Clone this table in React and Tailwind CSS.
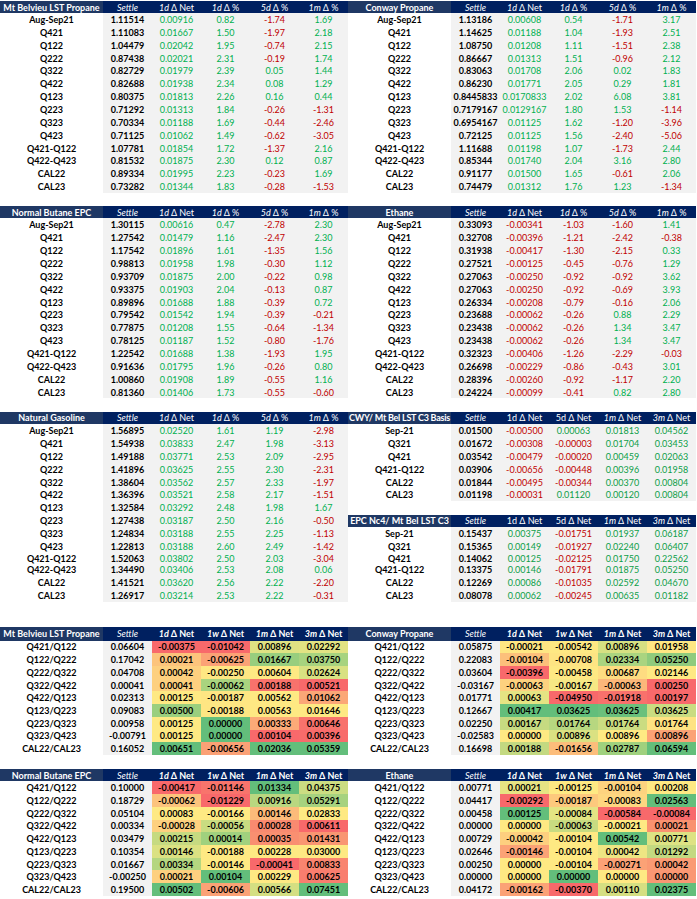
import React from 'react';

const GREEN = 'text-[#00b050]';
const GREEN2 = 'text-[#0c9e48]';

const HTOP = [
  { n: <i>Settle</i> },
  { n: <><i>1d</i>&nbsp;Δ Net</> },
  { n: <><i>1d</i>&nbsp;Δ %</> },
  { n: <><i>5d</i>&nbsp;Δ %</> },
  { n: <><i>1m</i>&nbsp;Δ %</> },
];

const HBASIS = [
  { n: <i>Settle</i> },
  { n: <>1d&nbsp;Δ Net</> },
  { n: <>5d&nbsp;Δ Net</> },
  { n: <><i>1m</i>&nbsp;Δ Net</> },
  { n: <><i>3m</i>&nbsp;Δ Net</> },
];

const HHEAT = [
  { n: <i className="font-normal">Settle</i> },
  { n: <><i>1d</i>&nbsp;Δ Net</> },
  { n: <><i>1w</i>&nbsp;Δ Net</> },
  { n: <><i>1m</i>&nbsp;Δ Net</> },
  { n: <><i>3m</i>&nbsp;Δ Net</> },
];

const mtbel = [
  ['Aug-Sep21', '1.11514', '0.00916', '0.82', '-1.74', '1.69'],
  ['Q421', '1.11083', '0.01667', '1.50', '-1.97', '2.18'],
  ['Q122', '1.04479', '0.02042', '1.95', '-0.74', '2.15'],
  ['Q222', '0.87438', '0.02021', '2.31', '-0.19', '1.74'],
  ['Q322', '0.82729', '0.01979', '2.39', '0.05', '1.44'],
  ['Q422', '0.82688', '0.01938', '2.34', '0.08', '1.29'],
  ['Q123', '0.80375', '0.01813', '2.26', '0.16', '0.44'],
  ['Q223', '0.71292', '0.01313', '1.84', '-0.26', '-1.31'],
  ['Q323', '0.70334', '0.01188', '1.69', '-0.44', '-2.46'],
  ['Q423', '0.71125', '0.01062', '1.49', '-0.62', '-3.05'],
  ['Q421-Q122', '1.07781', '0.01854', '1.72', '-1.37', '2.16'],
  ['Q422-Q423', '0.81532', '0.01875', '2.30', '0.12', '0.87'],
  ['CAL22', '0.89334', '0.01995', '2.23', '-0.23', '1.69'],
  ['CAL23', '0.73282', '0.01344', '1.83', '-0.28', '-1.53'],
];

const conway = [
  ['Aug-Sep21', '1.13186', '0.00608', '0.54', '-1.71', '3.17'],
  ['Q421', '1.14625', '0.01188', '1.04', '-1.93', '2.51'],
  ['Q122', '1.08750', '0.01208', '1.11', '-1.51', '2.38'],
  ['Q222', '0.86667', '0.01313', '1.51', '-0.96', '2.12'],
  ['Q322', '0.83063', '0.01708', '2.06', '0.02', '1.83'],
  ['Q422', '0.86230', '0.01771', '2.05', '0.29', '1.81'],
  ['Q123', '0.8445833', '0.0170833', '2.02', '6.08', '3.81'],
  ['Q223', '0.7179167', '0.0129167', '1.80', '1.53', '-1.14'],
  ['Q323', '0.6954167', '0.01125', '1.62', '-1.20', '-3.96'],
  ['Q423', '0.72125', '0.01125', '1.56', '-2.40', '-5.06'],
  ['Q421-Q122', '1.11688', '0.01198', '1.07', '-1.73', '2.44'],
  ['Q422-Q423', '0.85344', '0.01740', '2.04', '3.16', '2.80'],
  ['CAL22', '0.91177', '0.01500', '1.65', '-0.61', '2.06'],
  ['CAL23', '0.74479', '0.01312', '1.76', '1.23', '-1.34'],
];

const butane = [
  ['Aug-Sep21', '1.30115', '0.00616', '0.47', '-2.78', '2.30'],
  ['Q421', '1.27542', '0.01479', '1.16', '-2.47', '2.30'],
  ['Q122', '1.17542', '0.01896', '1.61', '-1.35', '1.56'],
  ['Q222', '0.98813', '0.01958', '1.98', '-0.30', '1.12'],
  ['Q322', '0.93709', '0.01875', '2.00', '-0.22', '0.98'],
  ['Q422', '0.93375', '0.01903', '2.04', '-0.13', '0.87'],
  ['Q123', '0.89896', '0.01688', '1.88', '-0.39', '0.72'],
  ['Q223', '0.79542', '0.01542', '1.94', '-0.39', '-0.21'],
  ['Q323', '0.77875', '0.01208', '1.55', '-0.64', '-1.34'],
  ['Q423', '0.78125', '0.01187', '1.52', '-0.80', '-1.76'],
  ['Q421-Q122', '1.22542', '0.01688', '1.38', '-1.93', '1.95'],
  ['Q422-Q423', '0.91636', '0.01795', '1.96', '-0.26', '0.80'],
  ['CAL22', '1.00860', '0.01908', '1.89', '-0.55', '1.16'],
  ['CAL23', '0.81360', '0.01406', '1.73', '-0.55', '-0.60'],
];

const ethane = [
  ['Aug-Sep21', '0.33093', '-0.00341', '-1.03', '-1.60', '1.41'],
  ['Q421', '0.32708', '-0.00396', '-1.21', '-2.42', '-0.38'],
  ['Q122', '0.31938', '-0.00417', '-1.30', '-2.15', '0.33'],
  ['Q222', '0.27521', '-0.00125', '-0.45', '-0.76', '1.29'],
  ['Q322', '0.27063', '-0.00250', '-0.92', '-0.92', '3.62'],
  ['Q422', '0.27063', '-0.00250', '-0.92', '-0.69', '3.93'],
  ['Q123', '0.26334', '-0.00208', '-0.79', '-0.16', '2.06'],
  ['Q223', '0.23688', '-0.00062', '-0.26', '0.88', '2.29'],
  ['Q323', '0.23438', '-0.00062', '-0.26', '1.34', '3.47'],
  ['Q423', '0.23438', '-0.00062', '-0.26', '1.34', '3.47'],
  ['Q421-Q122', '0.32323', '-0.00406', '-1.26', '-2.29', '-0.03'],
  ['Q422-Q423', '0.26698', '-0.00229', '-0.86', '-0.43', '3.01'],
  ['CAL22', '0.28396', '-0.00260', '-0.92', '-1.17', '2.20'],
  ['CAL23', '0.24224', '-0.00099', '-0.41', '0.82', '2.80'],
];

const natgas = [
  ['Aug-Sep21', '1.56895', '0.02520', '1.61', '1.19', '-2.98'],
  ['Q421', '1.54938', '0.03833', '2.47', '1.98', '-3.13'],
  ['Q122', '1.49188', '0.03771', '2.53', '2.09', '-2.95'],
  ['Q222', '1.41896', '0.03625', '2.55', '2.30', '-2.31'],
  ['Q322', '1.38604', '0.03562', '2.57', '2.33', '-1.97'],
  ['Q422', '1.36396', '0.03521', '2.58', '2.17', '-1.51'],
  ['Q123', '1.32584', '0.03292', '2.48', '1.98', '1.67'],
  ['Q223', '1.27438', '0.03187', '2.50', '2.16', '-0.50'],
  ['Q323', '1.24834', '0.03188', '2.55', '2.25', '-1.13'],
  ['Q423', '1.22813', '0.03188', '2.60', '2.49', '-1.42'],
  ['Q421-Q122', '1.52063', '0.03802', '2.50', '2.03', '-3.04'],
  ['Q422-Q423', '1.34490', '0.03406', '2.53', '2.08', '0.06'],
  ['CAL22', '1.41521', '0.03620', '2.56', '2.22', '-2.20'],
  ['CAL23', '1.26917', '0.03214', '2.53', '2.22', '-0.31'],
];

const cwy = [
  ['Sep-21', '0.01500', '-0.00500', '0.00063', '0.01813', '0.04562'],
  ['Q321', '0.01672', '-0.00308', '-0.00003', '0.01704', '0.03453'],
  ['Q421', '0.03542', '-0.00479', '-0.00020', '0.00459', '0.02063'],
  ['Q421-Q122', '0.03906', '-0.00656', '-0.00448', '0.00396', '0.01958'],
  ['CAL22', '0.01844', '-0.00495', '-0.00344', '0.00370', '0.00804'],
  ['CAL23', '0.01198', '-0.00031', '0.01120', '0.00120', '0.00804'],
];

const epc = [
  ['Sep-21', '0.15437', '0.00375', '-0.01751', '0.01937', '0.06187'],
  ['Q321', '0.15365', '0.00149', '-0.01927', '0.02240', '0.06407'],
  ['Q421', '0.14062', '0.00125', '-0.02125', '0.01750', '0.22562'],
  ['Q421-Q122', '0.13375', '0.00146', '-0.01791', '0.01875', '0.05250'],
  ['CAL22', '0.12269', '0.00086', '-0.01035', '0.02592', '0.04670'],
  ['CAL23', '0.08078', '0.00062', '-0.00245', '0.00635', '0.01182'],
];

const heat1 = [
  ['Q421/Q122', '0.06604', ['-0.00375', 'bg-[#f8696b]'], ['-0.01042', 'bg-[#f8696b]'], ['0.00896', 'bg-[#dfe283]'], ['0.02292', 'bg-[#e2e383]']],
  ['Q122/Q222', '0.17042', ['0.00021', 'bg-[#fcc47c]'], ['-0.00625', 'bg-[#fba276]'], ['0.01667', 'bg-[#98ce7e]'], ['0.03750', 'bg-[#a7d37f]']],
  ['Q222/Q322', '0.04708', ['0.00042', 'bg-[#fdd07f]'], ['-0.00250', 'bg-[#fee783]'], ['0.00604', 'bg-[#fee983]'], ['0.02624', 'bg-[#d9e182]']],
  ['Q322/Q422', '0.00041', ['0.00041', 'bg-[#fdd07f]'], ['-0.00062', 'bg-[#a9d47f]'], ['0.00188', 'bg-[#f8726c]'], ['0.00521', 'bg-[#f8696b]']],
  ['Q422/Q123', '0.02313', ['0.00125', 'bg-[#fee983]'], ['-0.00187', 'bg-[#fee683]'], ['0.00562', 'bg-[#fee983]'], ['0.01062', 'bg-[#fba777]']],
  ['Q123/Q223', '0.09083', ['0.00500', 'bg-[#9acf7e]'], ['-0.00188', 'bg-[#fee683]'], ['0.00563', 'bg-[#fee983]'], ['0.01646', 'bg-[#fee983]']],
  ['Q223/Q323', '0.00958', ['0.00125', 'bg-[#fee983]'], ['0.00000', 'bg-[#63be7b]'], ['0.00333', 'bg-[#fcaa78]'], ['0.00646', 'bg-[#f8736c]']],
  ['Q323/Q423', '-0.00791', ['0.00125', 'bg-[#fee983]'], ['0.00000', 'bg-[#63be7b]'], ['0.00104', 'bg-[#f8696b]'], ['0.00396', 'bg-[#f86b6b]']],
  ['CAL22/CAL23', '0.16052', ['0.00651', 'bg-[#63be7b]'], ['-0.00656', 'bg-[#fba176]'], ['0.02036', 'bg-[#63be7b]'], ['0.05359', 'bg-[#63be7b]']],
];

const heat2 = [
  ['Q421/Q122', '0.05875', ['-0.00021', 'bg-[#fee683]'], ['-0.00542', 'bg-[#fee883]'], ['0.00896', 'bg-[#d6e082]'], ['0.01958', 'bg-[#fee783]']],
  ['Q122/Q222', '0.22083', ['-0.00104', 'bg-[#fcc07b]'], ['-0.00708', 'bg-[#fee483]'], ['0.02334', 'bg-[#aad480]'], ['0.05250', 'bg-[#8fcb7d]']],
  ['Q222/Q322', '0.03604', ['-0.00396', 'bg-[#f8696b]'], ['-0.00458', 'bg-[#fee883]'], ['0.00687', 'bg-[#fedc81]'], ['0.02146', 'bg-[#fee983]']],
  ['Q322/Q422', '-0.03167', ['-0.00063', 'bg-[#fdd17f]'], ['-0.00167', 'bg-[#f6e884]'], ['-0.00063', 'bg-[#fcb77a]'], ['0.00250', 'bg-[#f8696b]']],
  ['Q422/Q123', '0.01771', ['0.00063', 'bg-[#e5e483]'], ['-0.04950', 'bg-[#f8696b]'], ['-0.01918', 'bg-[#f8716c]'], ['0.00197', 'bg-[#f8696b]']],
  ['Q123/Q223', '0.12667', ['0.00417', 'bg-[#63be7b]'], ['0.03625', 'bg-[#63be7b]'], ['0.03625', 'bg-[#6ac07c]'], ['0.03625', 'bg-[#c9dc81]']],
  ['Q223/Q323', '0.02250', ['0.00167', 'bg-[#c6da81]'], ['0.01764', 'bg-[#b7d780]'], ['0.01764', 'bg-[#cbdc81]'], ['0.01764', 'bg-[#fee382]']],
  ['Q323/Q423', '-0.02583', ['0.00000', 'bg-[#fee983]'], ['0.00896', 'bg-[#dae182]'], ['0.00896', 'bg-[#feea83]'], ['0.00896', 'bg-[#fba276]']],
  ['CAL22/CAL23', '0.16698', ['0.00188', 'bg-[#c3d981]'], ['-0.01656', 'bg-[#fcbd7b]'], ['0.02787', 'bg-[#9fd17e]'], ['0.06594', 'bg-[#63be7b]']],
];

const heat3 = [
  ['Q421/Q122', '0.10000', ['-0.00417', 'bg-[#f8696b]'], ['-0.01146', 'bg-[#f8746c]'], ['0.01334', 'bg-[#63be7b]'], ['0.04375', 'bg-[#cbdd82]']],
  ['Q122/Q222', '0.18729', ['-0.00062', 'bg-[#fcc37c]'], ['-0.01229', 'bg-[#f8696b]'], ['0.00916', 'bg-[#b9d780]'], ['0.05291', 'bg-[#a6d27f]']],
  ['Q222/Q322', '0.05104', ['0.00083', 'bg-[#fee983]'], ['-0.00166', 'bg-[#fee983]'], ['0.00146', 'bg-[#fcbb7a]'], ['0.02833', 'bg-[#fee983]']],
  ['Q322/Q422', '0.00334', ['-0.00028', 'bg-[#fdd07f]'], ['-0.00056', 'bg-[#c9dc81]'], ['0.00028', 'bg-[#f98a70]'], ['0.00611', 'bg-[#f8696b]']],
  ['Q422/Q123', '0.03479', ['0.00215', 'bg-[#c6da81]'], ['0.00014', 'bg-[#a0d17e]'], ['0.00035', 'bg-[#f98f71]'], ['0.01431', 'bg-[#f99672]']],
  ['Q123/Q223', '0.10354', ['0.00146', 'bg-[#dbe182]'], ['-0.00188', 'bg-[#fee983]'], ['0.00228', 'bg-[#fee983]'], ['0.03000', 'bg-[#fee983]']],
  ['Q223/Q323', '0.01667', ['0.00334', 'bg-[#b4d680]'], ['-0.00146', 'bg-[#fee983]'], ['-0.00041', 'bg-[#f8696b]'], ['0.00833', 'bg-[#f9856f]']],
  ['Q323/Q423', '-0.00250', ['0.00021', 'bg-[#fdd07f]'], ['0.00104', 'bg-[#63be7b]'], ['0.00229', 'bg-[#fee983]'], ['0.00625', 'bg-[#f97d6e]']],
  ['CAL22/CAL23', '0.19500', ['0.00502', 'bg-[#63be7b]'], ['-0.00606', 'bg-[#fba276]'], ['0.00566', 'bg-[#d4df82]'], ['0.07451', 'bg-[#63be7b]']],
];

const heat4 = [
  ['Q421/Q122', '0.00771', ['0.00021', 'bg-[#e6e483]'], ['-0.00125', 'bg-[#fee983]'], ['-0.00104', 'bg-[#fdd37f]'], ['0.00208', 'bg-[#fee983]']],
  ['Q122/Q222', '0.04417', ['-0.00292', 'bg-[#f8696b]'], ['-0.00187', 'bg-[#fdc97d]'], ['-0.00083', 'bg-[#fed780]'], ['0.02563', 'bg-[#63be7b]']],
  ['Q222/Q322', '0.00458', ['0.00125', 'bg-[#63be7b]'], ['-0.00084', 'bg-[#e4e483]'], ['-0.00584', 'bg-[#f8696b]'], ['-0.00084', 'bg-[#f8696b]']],
  ['Q322/Q422', '0.00000', ['0.00000', 'bg-[#fee983]'], ['-0.00063', 'bg-[#c8db81]'], ['-0.00021', 'bg-[#fee983]'], ['0.00021', 'bg-[#f99270]']],
  ['Q422/Q123', '0.00729', ['-0.00042', 'bg-[#fdcf7f]'], ['-0.00104', 'bg-[#fee983]'], ['0.00542', 'bg-[#63be7b]'], ['0.00771', 'bg-[#dde283]']],
  ['Q123/Q223', '0.02646', ['-0.00146', 'bg-[#fba276]'], ['-0.00104', 'bg-[#fee983]'], ['0.00042', 'bg-[#eee683]'], ['0.01292', 'bg-[#c3d981]']],
  ['Q223/Q323', '0.00250', ['0.00000', 'bg-[#fee983]'], ['-0.00104', 'bg-[#fee983]'], ['-0.00271', 'bg-[#fba276]'], ['0.00042', 'bg-[#fa9a73]']],
  ['Q323/Q423', '0.00000', ['0.00000', 'bg-[#fee983]'], ['0.00000', 'bg-[#63be7b]'], ['0.00000', 'bg-[#fee983]'], ['0.00000', 'bg-[#fa9773]']],
  ['CAL22/CAL23', '0.04172', ['-0.00162', 'bg-[#fba276]'], ['-0.00370', 'bg-[#f8696b]'], ['0.00110', 'bg-[#d5df82]'], ['0.02375', 'bg-[#63be7b]']],
];

function HeaderRow({ title, cols, h, bold, tight }) {
  return (
    <div className={`flex w-[348px] shrink-0 text-white ${h}`}>
      <div
        className={`w-[103px] shrink-0 bg-[#1f3864] flex items-center justify-center font-bold overflow-hidden whitespace-nowrap ${tight ? 'tracking-[-0.25px]' : ''}`}
      >
        {title}
      </div>
      {cols.map((c, i) => (
        <div
          key={i}
          className={`w-[49px] shrink-0 ${c.bg || 'bg-[#002060]'} flex items-center justify-center whitespace-nowrap ${bold ? 'font-bold' : ''}`}
        >
          {c.n}
        </div>
      ))}
    </div>
  );
}

function DataRow({ r, h, green }) {
  const [label, settle, ...vals] = r;
  return (
    <div className={`flex w-[348px] shrink-0 ${h}`}>
      <div className="w-[103px] shrink-0 flex items-center justify-center font-bold text-black whitespace-nowrap">{label}</div>
      <div className="w-[49px] shrink-0 bg-[#f2f2f2] flex items-center justify-center font-bold text-black">{settle}</div>
      {vals.map((v, i) => (
        <div
          key={i}
          className={`w-[49px] shrink-0 bg-[#f2f2f2] flex items-center justify-center ${v.startsWith('-') ? 'text-[#c00000]' : green}`}
        >
          {v}
        </div>
      ))}
    </div>
  );
}

function HeatRow({ r }) {
  const [label, settle, ...vals] = r;
  return (
    <div className="flex w-[348px] shrink-0 h-[12.73px] font-bold text-black">
      <div className="w-[103px] shrink-0 flex items-center justify-center whitespace-nowrap">{label}</div>
      <div className="w-[49px] shrink-0 bg-[#f2f2f2] flex items-center justify-center">{settle}</div>
      {vals.map(([v, bg], i) => (
        <div key={i} className={`w-[49px] shrink-0 ${bg} flex items-center justify-center`}>
          {v}
        </div>
      ))}
    </div>
  );
}

function TopTable({ title, rows, hh }) {
  return (
    <div className="flex flex-col w-[348px]">
      <HeaderRow title={title} cols={HTOP} h={hh} />
      {rows.map((r, i) => (
        <DataRow key={i} r={r} h="h-[12.86px]" green={GREEN} />
      ))}
    </div>
  );
}

function HeatTable({ title, rows, hh }) {
  return (
    <div className="flex flex-col w-[348px]">
      <HeaderRow title={title} cols={HHEAT} h={hh} bold />
      {rows.map((r, i) => (
        <HeatRow key={i} r={r} />
      ))}
    </div>
  );
}

const s3h = (i) => (i === 10 ? 'h-[10.4px]' : 'h-[12.9px]');

export default function App() {
  return (
    <div className="w-[697px] h-[899px] overflow-hidden bg-white pt-[1px] font-['Lato','Noto_Sans',sans-serif] text-[9px] leading-none">
      {/* Section 1 */}
      <div className="flex">
        <TopTable title="Mt Belvieu LST Propane" rows={mtbel} hh="h-[12px]" />
        <TopTable title="Conway Propane" rows={conway} hh="h-[12px]" />
      </div>
      <div className="h-[13px]" />
      {/* Section 2 */}
      <div className="flex">
        <TopTable title="Normal Butane EPC" rows={butane} hh="h-[12.4px]" />
        <TopTable title="Ethane" rows={ethane} hh="h-[12.4px]" />
      </div>
      <div className="h-[13.3px]" />
      {/* Section 3 */}
      <div className="flex">
        <div className="flex flex-col w-[348px]">
          <HeaderRow title="Natural Gasoline" cols={HTOP} h="h-[12.3px]" />
          {natgas.map((r, i) => (
            <DataRow key={i} r={r} h={s3h(i)} green={GREEN} />
          ))}
        </div>
        <div className="flex flex-col w-[348px]">
          <HeaderRow title="CWY/ Mt Bel LST C3 Basis" cols={HBASIS} h="h-[12.3px]" tight />
          {cwy.map((r, i) => (
            <DataRow key={i} r={r} h="h-[12.9px]" green={GREEN2} />
          ))}
          <div className="h-[12.9px]" />
          <div className="h-[12.9px] flex flex-col justify-center">
            <HeaderRow title="EPC Nc4/ Mt Bel LST C3" cols={HBASIS} h="h-[11.6px]" />
          </div>
          {epc.map((r, i) => (
            <DataRow key={i} r={r} h={s3h(i + 8)} green={GREEN2} />
          ))}
        </div>
      </div>
      <div className="h-[25.2px]" />
      {/* Section 4 */}
      <div className="flex">
        <HeatTable title="Mt Belvieu LST Propane" rows={heat1} hh="h-[13.4px]" />
        <HeatTable title="Conway Propane" rows={heat2} hh="h-[13.4px]" />
      </div>
      <div className="h-[14px]" />
      {/* Section 5 */}
      <div className="flex">
        <HeatTable title="Normal Butane EPC" rows={heat3} hh="h-[12.4px]" />
        <HeatTable title="Ethane" rows={heat4} hh="h-[12.4px]" />
      </div>
    </div>
  );
}
